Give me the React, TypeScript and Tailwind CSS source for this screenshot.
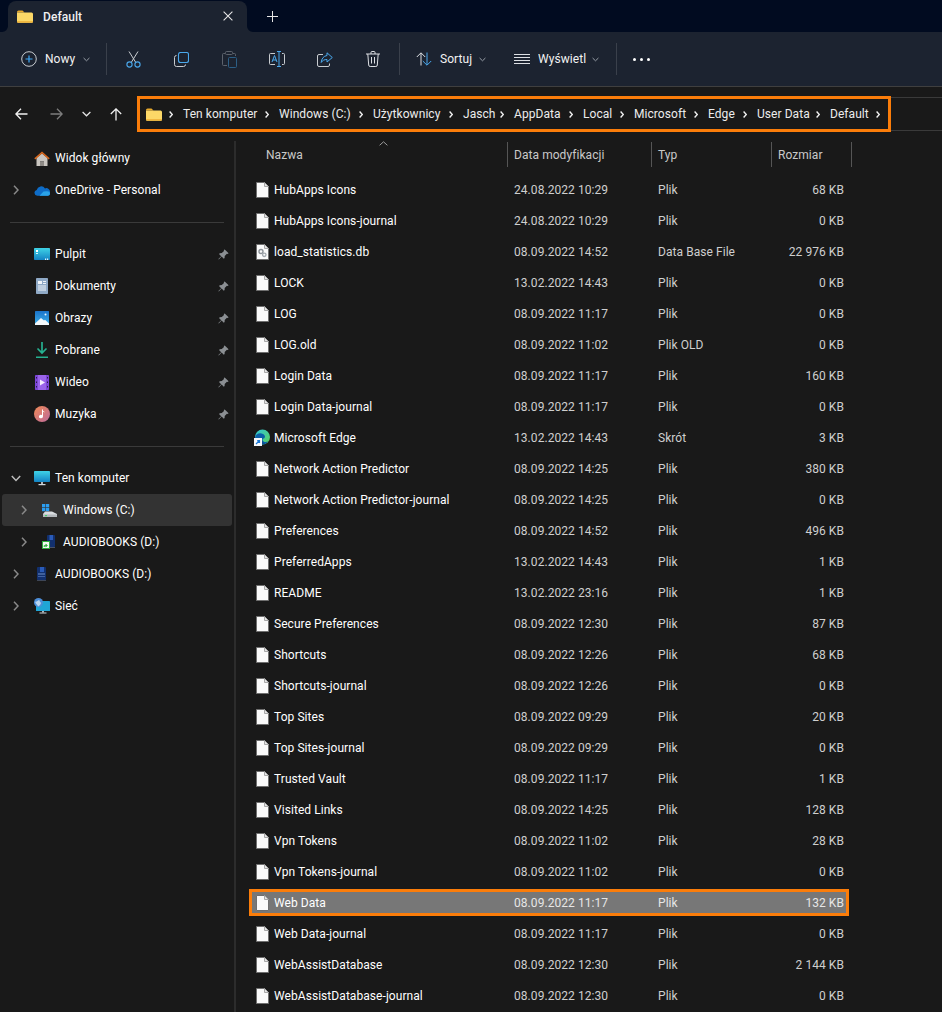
import React from "react";

const files: [string, string, string, string][] = [
  ["HubApps Icons", "24.08.2022 10:29", "Plik", "68 KB"],
  ["HubApps Icons-journal", "24.08.2022 10:29", "Plik", "0 KB"],
  ["load_statistics.db", "08.09.2022 14:52", "Data Base File", "22 976 KB"],
  ["LOCK", "13.02.2022 14:43", "Plik", "0 KB"],
  ["LOG", "08.09.2022 11:17", "Plik", "0 KB"],
  ["LOG.old", "08.09.2022 11:02", "Plik OLD", "0 KB"],
  ["Login Data", "08.09.2022 11:17", "Plik", "160 KB"],
  ["Login Data-journal", "08.09.2022 11:17", "Plik", "0 KB"],
  ["Microsoft Edge", "13.02.2022 14:43", "Skrót", "3 KB"],
  ["Network Action Predictor", "08.09.2022 14:25", "Plik", "380 KB"],
  ["Network Action Predictor-journal", "08.09.2022 14:25", "Plik", "0 KB"],
  ["Preferences", "08.09.2022 14:52", "Plik", "496 KB"],
  ["PreferredApps", "13.02.2022 14:43", "Plik", "1 KB"],
  ["README", "13.02.2022 23:16", "Plik", "1 KB"],
  ["Secure Preferences", "08.09.2022 12:30", "Plik", "87 KB"],
  ["Shortcuts", "08.09.2022 12:26", "Plik", "68 KB"],
  ["Shortcuts-journal", "08.09.2022 12:26", "Plik", "0 KB"],
  ["Top Sites", "08.09.2022 09:29", "Plik", "20 KB"],
  ["Top Sites-journal", "08.09.2022 09:29", "Plik", "0 KB"],
  ["Trusted Vault", "08.09.2022 11:17", "Plik", "1 KB"],
  ["Visited Links", "08.09.2022 14:25", "Plik", "128 KB"],
  ["Vpn Tokens", "08.09.2022 11:02", "Plik", "28 KB"],
  ["Vpn Tokens-journal", "08.09.2022 11:02", "Plik", "0 KB"],
  ["Web Data", "08.09.2022 11:17", "Plik", "132 KB"],
  ["Web Data-journal", "08.09.2022 11:17", "Plik", "0 KB"],
  ["WebAssistDatabase", "08.09.2022 12:30", "Plik", "2 144 KB"],
  ["WebAssistDatabase-journal", "08.09.2022 12:30", "Plik", "0 KB"],
];

const crumbs: [string, number][] = [
  ["Ten komputer", 96],
  ["Windows (C:)", 94],
  ["Użytkownicy", 90],
  ["Jasch", 51],
  ["AppData", 69],
  ["Local", 51],
  ["Microsoft", 74],
  ["Edge", 49],
  ["User Data", 73],
  ["Default", 60],
];

function Folder({ w = 16, h = 13 }: { w?: number; h?: number }) {
  return (
    <svg width={w} height={h} viewBox="0 0 16 13" className="shrink-0">
      <path d="M0 2a1.5 1.5 0 0 1 1.5-1.5h4L7.5 2.5H0z" fill="#e8a92c" />
      <path d="M0 2.5h14.5A1.5 1.5 0 0 1 16 4v7.5a1.2 1.2 0 0 1-1.2 1.2H1.2A1.2 1.2 0 0 1 0 11.5z" fill="#fcd867" />
      <path d="M0 11.5a1.2 1.2 0 0 0 1.2 1.2h13.6a1.2 1.2 0 0 0 1.2-1.2v-.5H0z" fill="#f0b73f" />
    </svg>
  );
}

function PathChevron() {
  return (
    <svg width="4" height="7" viewBox="0 0 4 7" className="shrink-0">
      <path d="M.6.6 3.3 3.5.6 6.4" fill="none" stroke="#f2f2f2" strokeWidth="1.4" />
    </svg>
  );
}

function SmallDown() {
  return (
    <svg width="7" height="5" viewBox="0 0 7 5" className="shrink-0">
      <path d="M.6 1 3.5 3.8 6.4 1" fill="none" stroke="#9aa0a8" strokeWidth="1" />
    </svg>
  );
}

function FileIcon({ gear = false }: { gear?: boolean }) {
  return (
    <svg width="13" height="16" viewBox="0 0 13 16" className="shrink-0">
      <path d="M.5.5h8l4 4v11H.5z" fill="#fafafa" stroke="#6f6f6f" strokeWidth="1" />
      <path d="M8.5.5v4h4" fill="#e4e4e4" stroke="#a8a8a8" strokeWidth="1" />
      {gear && (
        <g>
          <circle cx="5" cy="7.5" r="2" fill="none" stroke="#8c9298" strokeWidth="1.4" />
          <circle cx="8.3" cy="10.8" r="1.7" fill="none" stroke="#a2a8ae" strokeWidth="1.3" />
        </g>
      )}
    </svg>
  );
}

function EdgeIcon() {
  return (
    <svg width="16" height="17" viewBox="0 0 16 17" className="shrink-0">
      <defs>
        <linearGradient id="edgeA" x1="0" y1="0" x2="1" y2="1">
          <stop offset="0" stopColor="#2fc3d8" />
          <stop offset="1" stopColor="#5fd35a" />
        </linearGradient>
      </defs>
      <circle cx="8.5" cy="8" r="7.5" fill="url(#edgeA)" />
      <path d="M1 8.5C2 4.5 6 3.5 9 5c2.5 1.3 2.6 4 .6 4.4-2 .4-1 3.5 2 3.6 1 0 2-.3 2.6-.8-1.400 2.300-3.700 3.300-5.700 3.300C4 15.500 1 12 1 8.500z" fill="#0b5fa8" />
      <path d="M8 9c-1 2 .4 5 3.600 5.600-1 .5-2 .7-3.100.7-2-.3-3.700-2-3.700-4 0-1.500 1.200-2.800 3.200-2.300z" fill="#0a4c93" />
      <rect x="0" y="9" width="8" height="8" fill="#f5f7fa" />
      <path d="M2 15l3-3M3.200 11.700h2.300V14" fill="none" stroke="#1977d4" strokeWidth="1.200" />
    </svg>
  );
}

function Pin() {
  return (
    <svg width="11" height="11" viewBox="0 0 11 11" className="shrink-0">
      <path d="M6.700.4 10.600 4.300 9.700 5 8.900 4.800 6.700 7 6.600 9 5.800 9.800 3.600 7.600.8 10.400.4 10 3.200 7.200 1 5 1.800 4.200 3.800 4.100 6 1.900 5.800 1.100z" fill="#8b8f93" />
    </svg>
  );
}

function NavChevron({ open = false, bright = false }: { open?: boolean; bright?: boolean }) {
  const c = bright ? "#bdbdbd" : "#8a8a8a";
  return open ? (
    <svg width="10" height="7" viewBox="0 0 10 7">
      <path d="M.8 1 5 5.400 9.200 1" fill="none" stroke={c} strokeWidth="1.500" />
    </svg>
  ) : (
    <svg width="6" height="10" viewBox="0 0 6 10">
      <path d="M1 .8 5 5 1 9.200" fill="none" stroke={c} strokeWidth="1.500" />
    </svg>
  );
}

const Home = () => (
  <svg width="16" height="15" viewBox="0 0 16 15">
    <path d="M2.500 7 8 2.500 13.500 7v8h-3.500v-4.500H6V15H2.500z" fill="#c9c5c0" />
    <path d="M.3 7.300 8 .4l7.700 6.900-1 1.100L8 2.600 1.300 8.400z" fill="#d8671c" />
    <rect x="6" y="10.500" width="4" height="4.500" fill="#8e8a86" />
  </svg>
);
const OneDrive = () => (
  <svg width="16" height="11" viewBox="0 0 16 11">
    <path d="M3.300 10.800a3 3 0 0 1-.6-5.900A4.600 4.600 0 0 1 11 3.400a3.700 3.700 0 0 1 5 3.900 3 3 0 0 1-2 3.500z" fill="#0e6cc7" />
    <path d="M5.500 10.800 9.500 6.500l3-.2c2-.2 3.500.4 3.500 2.200 0 1.300-1 2.300-2.200 2.300z" fill="#2aa2e8" />
  </svg>
);
const Desktop = () => (
  <svg width="16" height="13" viewBox="0 0 16 13">
    <defs>
      <linearGradient id="dk" x1="0" y1="0" x2="0" y2="1">
        <stop offset="0" stopColor="#3fd3e6" />
        <stop offset="1" stopColor="#1383c4" />
      </linearGradient>
    </defs>
    <rect width="16" height="12" rx=".8" fill="url(#dk)" />
    <rect x="2" y="2" width="2" height="2" fill="#fff" />
    <rect x="2" y="5" width="2" height="1" fill="#d5f5fa" />
    <rect x="11" y="10.500" width="1.200" height="1.500" fill="#e0f7fb" />
    <rect x="13" y="10.500" width="1.200" height="1.500" fill="#e0f7fb" />
  </svg>
);
const Docs = () => (
  <svg width="12" height="16" viewBox="0 0 12 16">
    <rect width="12" height="16" rx=".8" fill="#8fa9c6" />
    <rect x="2" y="3" width="4" height="3" fill="#f0f4f8" />
    <path d="M7 3.500h3M7 5.500h3M2 8h8M2 10h8M2 12h8" stroke="#f0f4f8" strokeWidth="1" />
  </svg>
);
const Pics = () => (
  <svg width="14" height="14" viewBox="0 0 14 14">
    <defs>
      <linearGradient id="pc" x1="0" y1="0" x2="0" y2="1">
        <stop offset="0" stopColor="#1b73c9" />
        <stop offset="1" stopColor="#3db2ea" />
      </linearGradient>
    </defs>
    <rect width="14" height="14" rx=".6" fill="url(#pc)" />
    <path d="M0 12.500 6 7l3 2.500 1-.8L14 12.500V14H0z" fill="#f4f8fb" />
    <circle cx="10.500" cy="3.500" r="1" fill="#e9f6fd" />
  </svg>
);
const Download = () => (
  <svg width="12" height="16" viewBox="0 0 12 16">
    <path d="M6 0v11M1.500 6.500 6 11l4.500-4.500" fill="none" stroke="#26b090" strokeWidth="1.700" />
    <rect y="14.500" width="12" height="1.500" fill="#26b090" />
  </svg>
);
const Video = () => (
  <svg width="14" height="15" viewBox="0 0 14 15">
    <rect width="14" height="15" rx=".8" fill="#7c46d6" />
    <rect x="3" y="0" width="8" height="15" fill="#9a64ea" />
    <path d="M5 4.500 10 7.500 5 10.500z" fill="#f5eefe" />
    <g fill="#2a1a4a">
      <rect x="1" y="2" width="1" height="1.500" />
      <rect x="1" y="6.500" width="1" height="1.500" />
      <rect x="1" y="11" width="1" height="1.500" />
      <rect x="12" y="2" width="1" height="1.500" />
      <rect x="12" y="6.500" width="1" height="1.500" />
      <rect x="12" y="11" width="1" height="1.500" />
    </g>
  </svg>
);
const Music = () => (
  <svg width="16" height="16" viewBox="0 0 16 16">
    <defs>
      <linearGradient id="ms" x1="0" y1="0" x2="1" y2="1">
        <stop offset="0" stopColor="#ef8a55" />
        <stop offset="1" stopColor="#bd6a9c" />
      </linearGradient>
    </defs>
    <circle cx="8" cy="8" r="8" fill="url(#ms)" />
    <path d="M8 3.500h1V5c1 .3 1.500.8 1.700 1.500C10 6 9.500 5.800 9 5.800V10.500a2 1.700 0 1 1-1-1.500z" fill="#fff" />
  </svg>
);
const Monitor = () => (
  <svg width="16" height="15" viewBox="0 0 16 15">
    <defs>
      <linearGradient id="mn" x1="0" y1="0" x2="0" y2="1">
        <stop offset="0" stopColor="#3fd3e6" />
        <stop offset="1" stopColor="#1383c4" />
      </linearGradient>
    </defs>
    <rect width="16" height="11" rx=".8" fill="url(#mn)" />
    <rect x="7" y="11" width="2" height="2" fill="#aeb8bf" />
    <rect x="4.500" y="13" width="7" height="1.200" fill="#cfd6db" />
  </svg>
);
const WinDrive = () => (
  <svg width="16" height="13" viewBox="0 0 16 13">
    <g fill="#2b9df0">
      <rect x="0" y="0" width="3.300" height="3.300" />
      <rect x="3.900" y="0" width="3.300" height="3.300" />
      <rect x="0" y="3.900" width="3.300" height="3.300" />
      <rect x="3.900" y="3.900" width="3.300" height="3.300" />
    </g>
    <path d="M3 7.500h7l5 2.500v3H1v-3z" fill="#d9dde0" />
    <rect x="1" y="10.500" width="14" height="2.500" fill="#b3b8bc" />
    <rect x="3" y="11" width="2" height="1.200" fill="#3fd36a" />
  </svg>
);
const Device = () => (
  <svg width="9" height="14" viewBox="0 0 9 14">
    <rect x="0" y="0" width="9" height="13" rx=".8" fill="#12306e" />
    <rect x="3" y="0" width="4" height="5" fill="#2a5bb8" />
    <rect x="1" y="6.500" width="7" height="1" fill="#6f8fc8" />
    <rect x="1" y="9" width="7" height="1" fill="#42619e" />
    <rect x="0" y="13" width="9" height="1" fill="#3e4656" />
  </svg>
);
const NetDrive = () => (
  <svg width="13" height="14" viewBox="0 0 13 14">
    <rect x="5" y="0" width="8" height="12" rx=".8" fill="#12306e" />
    <rect x="7.500" y="0" width="3.500" height="5" fill="#2a5bb8" />
    <rect x="5" y="12" width="8" height="1" fill="#4a5264" />
    <rect x="0" y="6" width="8" height="8" fill="#f4f8f4" />
    <rect x="0.500" y="6.500" width="7" height="7" fill="none" stroke="#2fae3f" strokeWidth="1" />
    <path d="M2 12v-1.500h2.500M3.800 9 5.500 10.500 3.800 12z" fill="#2fae3f" stroke="#2fae3f" strokeWidth=".6" />
  </svg>
);
const Network = () => (
  <svg width="16" height="16" viewBox="0 0 16 16">
    <rect x="2" y="3" width="14" height="10" rx=".6" fill="#20a6d6" />
    <rect x="8" y="13" width="2" height="1.500" fill="#aeb8bf" />
    <rect x="5.500" y="14.500" width="7" height="1" fill="#cfd6db" />
    <circle cx="4.500" cy="4.500" r="4.500" fill="#4d8ed8" />
    <path d="M1 3.500c1.500 1 2.500-1 4-1.500 1 .5.500 2 1.800 2.500C7.500 6 5 8 4 8.500 3.500 6.500 1.500 6 1 3.500z" fill="#b9d5ef" />
  </svg>
);

function SideRow({
  icon,
  label,
  level = 1,
  chevron,
  pin,
  selected,
}: {
  icon: React.ReactNode;
  label: string;
  level?: 1 | 2;
  chevron?: "right" | "down";
  pin?: boolean;
  selected?: boolean;
}) {
  return (
    <div
      className={`ml-[2px] flex h-[32px] w-[230px] items-center rounded-[3px] text-white ${
        selected ? "bg-[#333333]" : ""
      } ${level === 2 ? "pl-[8px]" : ""}`}
    >
      <div className="flex w-[28px] shrink-0 items-center justify-center">
        {chevron && <NavChevron open={chevron === "down"} bright={chevron === "down"} />}
      </div>
      <div className="flex w-[25px] shrink-0 items-center pl-[4px]">{icon}</div>
      <span>{label}</span>
      {pin && (
        <div className="ml-auto mr-[3px] flex">
          <Pin />
        </div>
      )}
    </div>
  );
}

function Divider() {
  return <div className="mx-[10px] mb-[15px] mt-[16px] h-px w-[214px] bg-[#3a3a3a]" />;
}

function ToolIcon({ children }: { children: React.ReactNode }) {
  return <div className="flex h-[54px] w-[48px] items-center justify-center">{children}</div>;
}

function HeaderCell({ label, width, left }: { label: string; width: string; left: string }) {
  return (
    <div className={`flex h-[25px] shrink-0 items-center border-r border-[#555555] text-[#c9c9c9] ${width} ${left}`}>
      {label}
    </div>
  );
}

export default function App() {
  return (
    <div className="flex h-[1012px] w-[942px] flex-col overflow-hidden bg-[#191919] font-[Roboto] text-[12px] leading-[16px] tracking-[0.06px]">
      {/* Title bar */}
      <div className="flex h-[32px] shrink-0 bg-[#010b20]">
        <div className="relative ml-[8px] mt-[1px] flex h-[31px] w-[239px] items-center rounded-t-[8px] bg-[#1c2330] pl-[9px] pr-[14px]">
          <svg width="6" height="6" viewBox="0 0 6 6" className="absolute bottom-0 left-[-6px]">
            <path d="M6 0v6H0a6 6 0 0 0 6-6z" fill="#1c2330" />
          </svg>
          <svg width="6" height="6" viewBox="0 0 6 6" className="absolute bottom-0 right-[-6px]">
            <path d="M0 0v6H6a6 6 0 0 1-6-6z" fill="#1c2330" />
          </svg>
          <Folder />
          <span className="ml-[10px] font-medium text-[#f0f0f0]">Default</span>
          <svg width="10" height="10" viewBox="0 0 10 10" className="ml-auto mb-[1px]">
            <path d="M.6.6l8.800 8.800M9.400.6.600 9.400" stroke="#e6e6e6" strokeWidth="1.100" />
          </svg>
        </div>
        <div className="ml-[20px] flex items-center">
          <svg width="11" height="11" viewBox="0 0 11 11">
            <path d="M5.500 0v11M0 5.500h11" stroke="#e6e6e6" strokeWidth="1" />
          </svg>
        </div>
      </div>

      {/* Toolbar */}
      <div className="flex h-[55px] shrink-0 items-center border-b border-[#3f3f3f] bg-[#1c2330] text-[#f2f2f2]">
        <div className="flex w-[106px] shrink-0 items-center pl-[21px]">
          <svg width="16" height="16" viewBox="0 0 16 16" className="shrink-0">
            <circle cx="8" cy="8" r="7.300" fill="none" stroke="#c8ccd0" strokeWidth="1" />
            <path d="M8 4.500v7M4.500 8h7" stroke="#3fa9f5" strokeWidth="1.200" />
          </svg>
          <span className="ml-[8px] w-[38px] shrink-0">Nowy</span>
          <SmallDown />
        </div>
        <div className="h-[32px] w-px shrink-0 bg-[#3a404b]" />
        <div className="ml-[2px] flex">
          <ToolIcon>
            <svg width="15" height="17" viewBox="0 0 15 17">
              <path d="M3 .5 9.500 11M12 .5 5.500 11" fill="none" stroke="#c8ccd0" strokeWidth="1" />
              <circle cx="3.500" cy="13.500" r="2.600" fill="none" stroke="#4aa8ec" strokeWidth="1.100" />
              <circle cx="11.500" cy="13.500" r="2.600" fill="none" stroke="#4aa8ec" strokeWidth="1.100" />
            </svg>
          </ToolIcon>
          <ToolIcon>
            <svg width="15" height="15" viewBox="0 0 15 15">
              <rect x="4.500" y=".5" width="10" height="10" rx="2" fill="none" stroke="#4aa8ec" strokeWidth="1.100" />
              <path d="M2.500 3.500A2 2 0 0 0 .5 5.500v7a2 2 0 0 0 2 2h7a2 2 0 0 0 2-2" fill="none" stroke="#c8ccd0" strokeWidth="1" />
            </svg>
          </ToolIcon>
          <ToolIcon>
            <svg width="15" height="17" viewBox="0 0 15 17">
              <path d="M3 2.500H1.500a1 1 0 0 0-1 1v10a1 1 0 0 0 1 1H5M11 2.500h1.500a1 1 0 0 1 1 1V5" fill="none" stroke="#5c626c" strokeWidth="1" />
              <rect x="3.500" y=".5" width="7" height="3" rx="1" fill="none" stroke="#5c626c" strokeWidth="1" />
              <rect x="6.500" y="6.500" width="8" height="10" rx="1" fill="none" stroke="#2c5f86" strokeWidth="1" />
            </svg>
          </ToolIcon>
          <ToolIcon>
            <svg width="17" height="16" viewBox="0 0 17 16">
              <path d="M6 2.500H1.500a1 1 0 0 0-1 1v9a1 1 0 0 0 1 1H6M13 2.500h1.500a1 1 0 0 1 1 1v9a1 1 0 0 1-1 1H13" fill="none" stroke="#c8ccd0" strokeWidth="1" />
              <path d="M8 .5h4M8 15.500h4M10 .5v15" fill="none" stroke="#4aa8ec" strokeWidth="1" />
              <path d="M3 11 5.500 4.500 8 11M3.900 9h3.200" fill="none" stroke="#4aa8ec" strokeWidth="1" />
            </svg>
          </ToolIcon>
          <ToolIcon>
            <svg width="16" height="15" viewBox="0 0 16 15">
              <path d="M6 2.500H2a1.500 1.500 0 0 0-1.500 1.500v9A1.500 1.500 0 0 0 2 14.500h9a1.500 1.500 0 0 0 1.500-1.500v-1.500" fill="none" stroke="#c8ccd0" strokeWidth="1" />
              <path d="M10 .8 15.300 5.500 10 10V7.500C7.500 7.500 5.500 8.300 4.200 10.500 4.500 6.800 6.500 4 10 3.500z" fill="none" stroke="#4aa8ec" strokeWidth="1" />
            </svg>
          </ToolIcon>
          <ToolIcon>
            <svg width="14" height="16" viewBox="0 0 14 16">
              <path d="M0 3h14M5 3V1.500a1 1 0 0 1 1-1h2a1 1 0 0 1 1 1V3M1.800 3l.9 11a1.500 1.500 0 0 0 1.500 1.500h5.600a1.500 1.500 0 0 0 1.500-1.500l.9-11M5.500 6v6.500M8.500 6v6.500" fill="none" stroke="#dcdfe3" strokeWidth="1" />
            </svg>
          </ToolIcon>
        </div>
        <div className="ml-[2px] h-[32px] w-px shrink-0 bg-[#3a404b]" />
        <div className="flex w-[114px] shrink-0 items-center pl-[16px]">
          <svg width="16" height="14" viewBox="0 0 16 14" className="shrink-0">
            <path d="M5 13.500V1M.8 5 5 .8 9.200 5" fill="none" stroke="#dcdfe3" strokeWidth="1" />
            <path d="M11 .5V13M6.800 9l4.200 4.200L15.200 9" fill="none" stroke="#4aa8ec" strokeWidth="1" />
          </svg>
          <span className="ml-[8px] w-[39px] shrink-0">Sortuj</span>
          <SmallDown />
        </div>
        <div className="flex w-[102px] shrink-0 items-center">
          <svg width="16" height="11" viewBox="0 0 16 11" className="shrink-0">
            <path d="M0 .5h16M0 3.500h16M0 6.500h16M0 9.500h16" stroke="#dcdfe3" strokeWidth="1" />
          </svg>
          <span className="ml-[8px] w-[54px] shrink-0 overflow-hidden whitespace-nowrap">Wyświetl</span>
          <SmallDown />
        </div>
        <div className="h-[32px] w-px shrink-0 bg-[#3a404b]" />
        <div className="ml-[16px] flex gap-[4px]">
          <div className="h-[3px] w-[3px] rounded-full bg-white" />
          <div className="h-[3px] w-[3px] rounded-full bg-white" />
          <div className="h-[3px] w-[3px] rounded-full bg-white" />
        </div>
      </div>

      {/* Navigation row */}
      <div className="flex h-[48px] shrink-0 items-start bg-[#191919] pt-[9px]">
        <div className="flex h-[36px] w-[137px] shrink-0 items-center">
          <div className="flex w-[42px] justify-center">
            <svg width="13" height="12" viewBox="0 0 13 12">
              <path d="M12.500 6H1M6 .8.900 6 6 11.200" fill="none" stroke="#f2f2f2" strokeWidth="1.300" />
            </svg>
          </div>
          <div className="flex w-[28px] justify-center">
            <svg width="13" height="12" viewBox="0 0 13 12">
              <path d="M.5 6H12M7 .8 12.100 6 7 11.200" fill="none" stroke="#7d7d7d" strokeWidth="1.300" />
            </svg>
          </div>
          <div className="flex w-[32px] justify-center">
            <svg width="9" height="6" viewBox="0 0 9 6">
              <path d="M.6 1 4.500 4.800 8.400 1" fill="none" stroke="#e6e6e6" strokeWidth="1.200" />
            </svg>
          </div>
          <div className="flex w-[27px] justify-center">
            <svg width="12" height="13" viewBox="0 0 12 13">
              <path d="M6 12.500V1M.8 6 6 .900 11.200 6" fill="none" stroke="#f2f2f2" strokeWidth="1.300" />
            </svg>
          </div>
        </div>
        <div className="flex h-[36px] w-[754px] shrink-0 items-center border-[3px] border-[#fb7d0a] pl-[6px] text-[#ececec]">
          <Folder />
          <div className="flex w-[21px] shrink-0 justify-end pr-[10px]">
            <PathChevron />
          </div>
          {crumbs.map(([label, width]) => (
            <div key={label} className="flex shrink-0 items-center justify-between pr-[10px]" style={{ width }}>
              <span className="whitespace-nowrap">{label}</span>
              <PathChevron />
            </div>
          ))}
        </div>
        <div className="mt-px h-[34px] flex-1 border-y border-[#3a3a3a]" />
      </div>

      {/* Main */}
      <div className="flex min-h-0 flex-1 pt-[6px]">
        <div className="w-[236px] shrink-0 border-r-[2px] border-[#2c2c2c] pt-px">
          <SideRow icon={<Home />} label="Widok główny" />
          <SideRow icon={<OneDrive />} label="OneDrive - Personal" chevron="right" />
          <Divider />
          <SideRow icon={<Desktop />} label="Pulpit" pin />
          <SideRow icon={<div className="pl-[2px]"><Docs /></div>} label="Dokumenty" pin />
          <SideRow icon={<div className="pl-px"><Pics /></div>} label="Obrazy" pin />
          <SideRow icon={<div className="pl-[2px]"><Download /></div>} label="Pobrane" pin />
          <SideRow icon={<div className="pl-px"><Video /></div>} label="Wideo" pin />
          <SideRow icon={<Music />} label="Muzyka" pin />
          <Divider />
          <SideRow icon={<Monitor />} label="Ten komputer" chevron="down" />
          <SideRow icon={<WinDrive />} label="Windows (C:)" level={2} chevron="right" selected />
          <SideRow icon={<NetDrive />} label="AUDIOBOOKS (D:)" level={2} chevron="right" />
          <SideRow icon={<div className="pl-[3px]"><Device /></div>} label="AUDIOBOOKS (D:)" chevron="right" />
          <SideRow icon={<Network />} label="Sieć" chevron="right" />
        </div>

        <div className="min-w-0 flex-1 pl-[13px]">
          <div className="relative mb-[7px] mt-px flex">
            <HeaderCell label="Nazwa" width="w-[259px]" left="pl-[17px]" />
            <HeaderCell label="Data modyfikacji" width="w-[144px]" left="pl-[6px]" />
            <HeaderCell label="Typ" width="w-[120px]" left="pl-[6px]" />
            <HeaderCell label="Rozmiar" width="w-[80px]" left="pl-[6px]" />
            <svg width="9" height="5" viewBox="0 0 9 5" className="absolute left-[130px] top-[-1px]">
              <path d="M.6 4.300 4.500.8 8.400 4.300" fill="none" stroke="#9a9a9a" strokeWidth="1" />
            </svg>
          </div>
          {files.map(([name, date, type, size]) => {
            const hl = name === "Web Data";
            return (
              <div key={name} className="flex h-[31px] items-center">
                <div
                  className={`grid w-[600px] grid-cols-[265px_144px_120px_1fr] items-center ${
                    hl ? "h-[27px] bg-[#777777] outline-[3px] -outline-offset-[3px] outline-[#fb7d0a]" : "h-[31px]"
                  }`}
                >
                  <div className="flex items-center pl-[7px] text-white">
                    <div className="flex w-[18px] shrink-0 items-center">
                      {name === "Microsoft Edge" ? (
                        <div className="-ml-[2px]"><EdgeIcon /></div>
                      ) : (
                        <FileIcon gear={name === "load_statistics.db"} />
                      )}
                    </div>
                    <span className="whitespace-nowrap">{name}</span>
                  </div>
                  <span className={`whitespace-nowrap ${hl ? "text-[#e6e6e6]" : "text-[#cfcfcf]"}`}>{date}</span>
                  <span className={`whitespace-nowrap ${hl ? "text-[#e6e6e6]" : "text-[#cfcfcf]"}`}>{type}</span>
                  <span className={`whitespace-nowrap pr-[5px] text-right ${hl ? "text-[#e6e6e6]" : "text-[#cfcfcf]"}`}>{size}</span>
                </div>
              </div>
            );
          })}
        </div>
      </div>
    </div>
  );
}
